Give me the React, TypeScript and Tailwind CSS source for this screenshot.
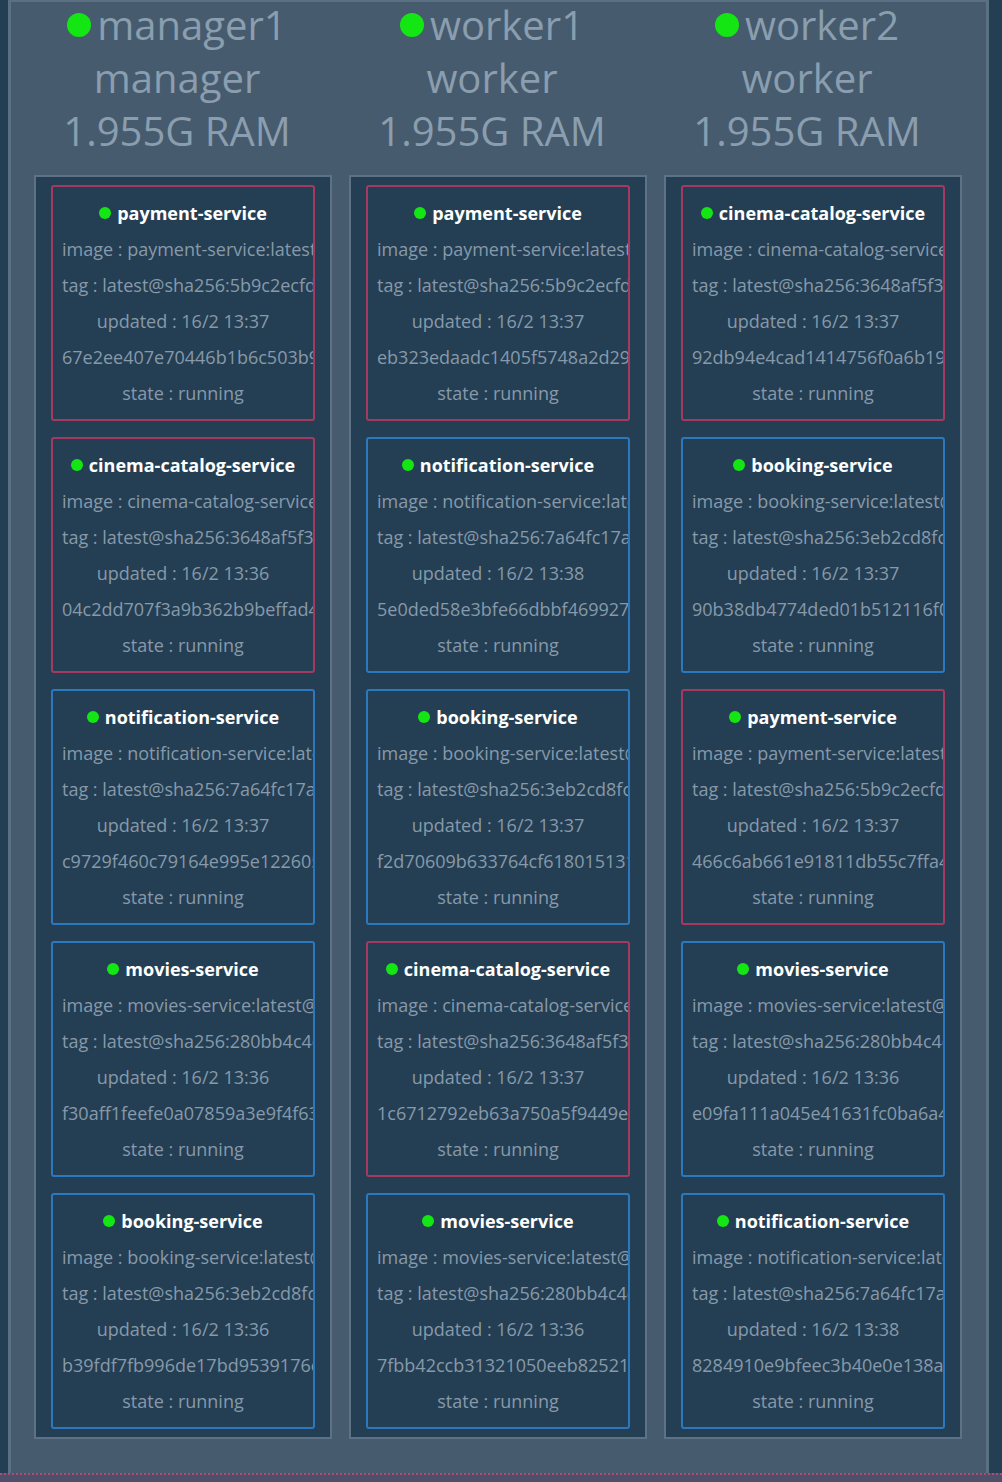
type Task = {
  name: string;
  updated: string;
  id: string;
};

type Node = {
  name: string;
  role: string;
  tasks: Task[];
};

const RED = new Set(["payment-service", "cinema-catalog-service"]);

const TAGS: Record<string, string> = {
  "payment-service": "5b9c2ecfd1b0c2e7a",
  "cinema-catalog-service": "3648af5f3e91a0d7c",
  "notification-service": "7a64fc17a5d2e0b13",
  "movies-service": "280bb4c4c0e8b1f95",
  "booking-service": "3eb2cd8fc7a1d4e60",
};

const nodes: Node[] = [
  {
    name: "manager1",
    role: "manager",
    tasks: [
      { name: "payment-service", updated: "16/2 13:37", id: "67e2ee407e70446b1b6c503b9a1" },
      { name: "cinema-catalog-service", updated: "16/2 13:36", id: "04c2dd707f3a9b362b9beffad4e" },
      { name: "notification-service", updated: "16/2 13:37", id: "c9729f460c79164e995e122605a" },
      { name: "movies-service", updated: "16/2 13:36", id: "f30aff1feefe0a07859a3e9f4f63" },
      { name: "booking-service", updated: "16/2 13:36", id: "b39fdf7fb996de17bd9539176e2" },
    ],
  },
  {
    name: "worker1",
    role: "worker",
    tasks: [
      { name: "payment-service", updated: "16/2 13:37", id: "eb323edaadc1405f5748a2d29c1" },
      { name: "notification-service", updated: "16/2 13:38", id: "5e0ded58e3bfe66dbbf469927b0" },
      { name: "booking-service", updated: "16/2 13:37", id: "f2d70609b633764cf618015131a" },
      { name: "cinema-catalog-service", updated: "16/2 13:37", id: "1c6712792eb63a750a5f9449e3d" },
      { name: "movies-service", updated: "16/2 13:36", id: "7fbb42ccb31321050eeb82521f4" },
    ],
  },
  {
    name: "worker2",
    role: "worker",
    tasks: [
      { name: "cinema-catalog-service", updated: "16/2 13:37", id: "92db94e4cad1414756f0a6b19d2" },
      { name: "booking-service", updated: "16/2 13:37", id: "90b38db4774ded01b512116f0e8" },
      { name: "payment-service", updated: "16/2 13:37", id: "466c6ab661e91811db55c7ffa4b" },
      { name: "movies-service", updated: "16/2 13:36", id: "e09fa111a045e41631fc0ba6a45" },
      { name: "notification-service", updated: "16/2 13:38", id: "8284910e9bfeec3b40e0e138a71" },
    ],
  },
];

function TaskCard({ task }: { task: Task }) {
  const border = RED.has(task.name) ? "border-[#a43a60]" : "border-[#2b78bf]";
  const lines = [
    `image : ${task.name}:latest@sha256`,
    `tag : latest@sha256:${TAGS[task.name]}`,
    `updated : ${task.updated}`,
    task.id,
    "state : running",
  ];
  return (
    <div className={`h-[236px] overflow-hidden rounded-[3px] border-2 ${border} bg-[#243f53] px-[9px] py-2`}>
      <div className="flex h-9 items-center justify-center gap-[6px] whitespace-nowrap text-[18px] font-bold text-white">
        <span className="inline-block h-3 w-3 rounded-full bg-[#14e614]" />
        {task.name}
      </div>
      {lines.map((l, i) => (
        <div key={i} className="h-9 whitespace-nowrap text-center text-[18px] leading-9 text-[#8799aa]">
          {l}
        </div>
      ))}
    </div>
  );
}

function NodeColumn({ node }: { node: Node }) {
  return (
    <div className="flex w-[298px] flex-col">
      <div className="-mt-[4px] pr-3 text-center text-[40px] leading-[53px] text-[#8a9eaf]">
        <div className="flex items-center justify-center gap-[6px]">
          <span className="inline-block h-6 w-6 rounded-full bg-[#14e614]" />
          {node.name}
        </div>
        <div>{node.role}</div>
        <div>1.955G RAM</div>
      </div>
      <div className="mt-[18px] flex flex-col gap-4 border-2 border-[#5d7285] bg-[#243f53] px-[15px] py-2">
        {node.tasks.map((t, i) => (
          <TaskCard key={i} task={t} />
        ))}
      </div>
    </div>
  );
}

export default function App() {
  return (
    <div className="h-[1482px] w-[1002px] overflow-hidden bg-[#243f53] font-['Open_Sans',sans-serif]">
      <div className="ml-2 mr-[13px] h-[1473px] border-x-[3px] border-t-2 border-[#5b7083] bg-[#475b6e]">
        <div className="flex gap-[17px] pl-[23px]">
          {nodes.map((n) => (
            <NodeColumn key={n.name} node={n} />
          ))}
        </div>
      </div>
      <div className="h-[9px] border-t-2 border-dotted border-[#b04a78] bg-[#4d5068]" />
    </div>
  );
}
